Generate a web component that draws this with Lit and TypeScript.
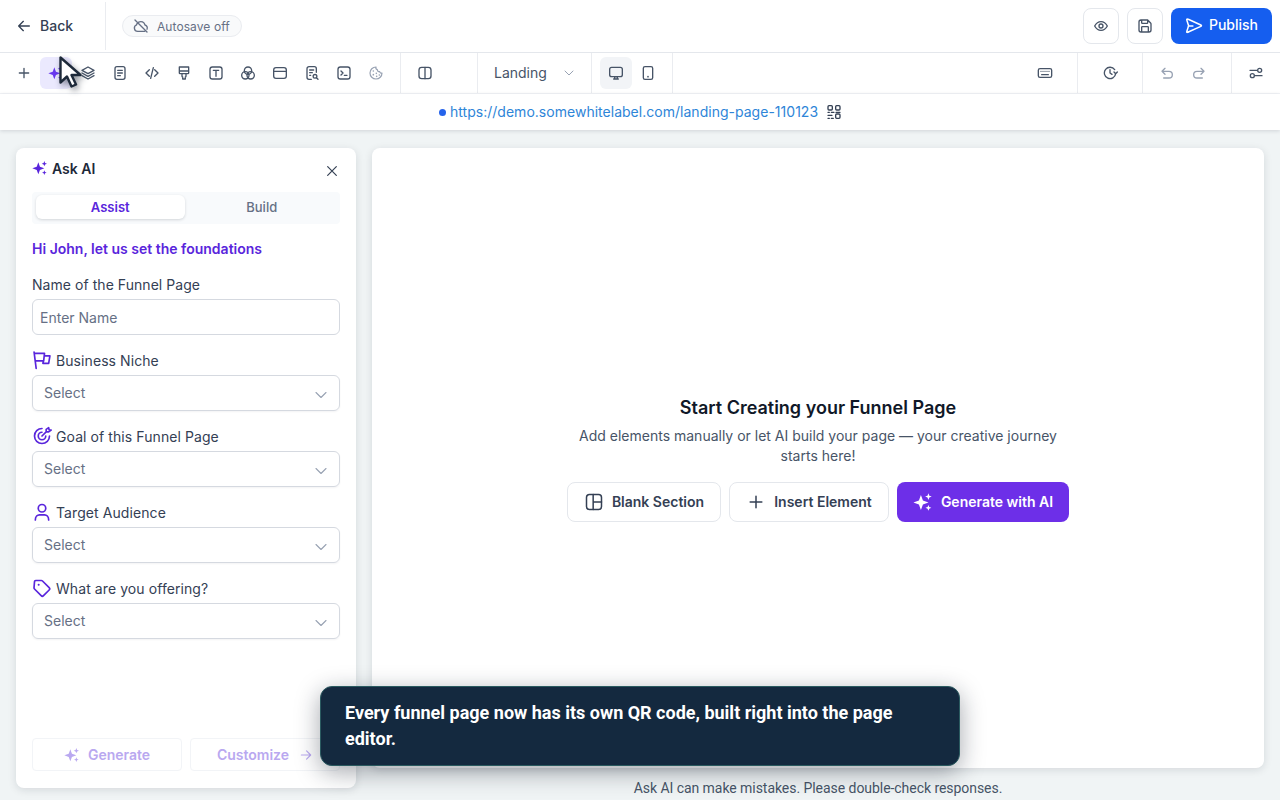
import { LitElement, html, css, svg } from 'lit';
import { customElement } from 'lit/decorators.js';

// icon bodies, all on a 24 grid and stroked with currentColor
const ICONS = {
  arrowLeft: svg`<path d="M20 12H4M11 5l-7 7 7 7"/>`,
  arrowRight: svg`<path d="M4 12h16M13 5l7 7-7 7"/>`,
  cloudOff: svg`<path d="M3 3l18 18M8.5 6.2A6.5 6.5 0 0 1 18 10.5a4.5 4.5 0 0 1 3 6.3M17.5 20H7a5 5 0 0 1-1.6-9.7c.1-.7.3-1.3.6-1.9"/>`,
  eye: svg`<path d="M2.5 12S6 5.5 12 5.5 21.5 12 21.5 12 18 18.5 12 18.5 2.5 12 2.5 12z"/><circle cx="12" cy="12" r="3"/>`,
  save: svg`<path d="M7 3v4a1 1 0 0 0 1 1h7a1 1 0 0 0 1-1V3M17 21v-7a1 1 0 0 0-1-1H8a1 1 0 0 0-1 1v7M16 3l4.4 4.4c.4.4.6.9.6 1.4V18a3 3 0 0 1-3 3H6a3 3 0 0 1-3-3V6a3 3 0 0 1 3-3z"/>`,
  send: svg`<path d="M10.5 12H5M4.6 12.4l-2 6.2c-.3.9-.4 1.4-.2 1.7.2.2.6.3.9.2.4-.1.9-.3 1.8-.8l15.3-6.9c.9-.4 1.3-.6 1.4-.9.1-.2.1-.5 0-.8-.1-.2-.5-.4-1.4-.8L5.1 3.4c-.9-.4-1.4-.6-1.8-.7-.3-.1-.7 0-.9.2-.2.3-.1.8.2 1.7l2 6.3c.1.2.1.3.1.5v.5c0 .2-.1.3-.1.5z"/>`,
  plus: svg`<path d="M12 5v14M5 12h14"/>`,
  layers: svg`<path d="M12 3l9 5-9 5-9-5z"/><path d="M3 12l9 5 9-5M3 16l9 5 9-5"/>`,
  doc: svg`<rect x="4.5" y="2.5" width="15" height="19" rx="3"/><path d="M8.5 8h7M8.5 12h7M8.5 16h4"/>`,
  code: svg`<path d="M8 7l-5 5 5 5M16 7l5 5-5 5M14 4l-4 16"/>`,
  brush: svg`<path d="M5 3h14v9a1 1 0 0 1-1 1H6a1 1 0 0 1-1-1zM5 9h14M9 13v4a1 1 0 0 0 1 1v3h4v-3a1 1 0 0 0 1-1v-4"/>`,
  text: svg`<rect x="3" y="3" width="18" height="18" rx="3.5"/><path d="M8 8h8M12 8v9"/>`,
  circles: svg`<circle cx="12" cy="8.5" r="5.5"/><circle cx="8" cy="15.5" r="5.5"/><circle cx="16" cy="15.5" r="5.5"/>`,
  browser: svg`<rect x="2.5" y="4" width="19" height="16" rx="3.5"/><path d="M2.5 9.5h19"/>`,
  docSearch: svg`<path d="M11 21.5H7.5a3 3 0 0 1-3-3v-13a3 3 0 0 1 3-3h8a3 3 0 0 1 3 3V11M8.5 7.5h6M8.5 11.5h4M8.5 15.5h1.5"/><circle cx="16.5" cy="17" r="2.8"/><path d="M18.6 19.1l2.4 2.4"/>`,
  terminal: svg`<rect x="3" y="3" width="18" height="18" rx="3.5"/><path d="M7.5 9l3 3-3 3M12.5 15.5h4"/>`,
  cookie: svg`<path d="M12 3a9 9 0 1 0 9 9c-1.5.5-3-.2-3.5-2-1.8.3-3.5-1-3.5-3-1.5-.5-2.5-2.5-2-4z"/><path d="M8 9h.01M8 14.5h.01M12.5 12.5h.01M13 17h.01M17 15h.01" stroke-width="2.5"/>`,
  columns: svg`<rect x="3" y="3.5" width="18" height="17" rx="4"/><path d="M12 3.5v17"/>`,
  chevron: svg`<path d="M6 9l6 6 6-6"/>`,
  monitor: svg`<rect x="2.5" y="3.5" width="19" height="14" rx="3"/><path d="M8.5 21h7M10 17.5h4V21h-4z"/>`,
  phone: svg`<rect x="5" y="2.5" width="14" height="19" rx="2.5"/><path d="M12 17.5h.01" stroke-width="2.5"/>`,
  keyboard: svg`<rect x="2" y="5.5" width="20" height="13" rx="2.5"/><path d="M6 9.5h.01M9 9.5h.01M12 9.5h.01M15 9.5h.01M18 9.5h.01M7 14.5h10" stroke-width="2"/>`,
  history: svg`<path d="M20.5 13a8.5 8.5 0 1 1-1.5-6M18 10.5l2.5 2.5 2.5-2.5M12 7v5l3 2"/>`,
  undo: svg`<path d="M9 5L4.5 9.5 9 14M4.5 9.5H15a5 5 0 0 1 0 10H7"/>`,
  redo: svg`<path d="M15 5l4.5 4.5L15 14M19.5 9.5H9a5 5 0 0 0 0 10h8"/>`,
  sliders: svg`<path d="M3 8h11M10 16h11"/><circle cx="17.5" cy="8" r="3"/><circle cx="6.5" cy="16" r="3"/>`,
  qr: svg`<rect x="3" y="2.5" width="6.5" height="6.5" rx="1.5"/><rect x="14.5" y="2.5" width="6.5" height="6.5" rx="1.5"/><rect x="14.5" y="15" width="6.5" height="6.5" rx="1.5"/><path d="M3 12.5h2M8 12.5h4M15 12.5h6M3 17h6M3 21.5h2M8 21.5h3"/>`,
  close: svg`<path d="M5.5 5.5l13 13M18.5 5.5l-13 13"/>`,
  flag: svg`<path d="M5 22L2.5 2.5M3 4h12l-1 9H4.2M15 7h6.5l-1.5 9h-7l1-3"/>`,
  target: svg`<path d="M21 12a9 9 0 1 1-9-9M16.5 12a4.5 4.5 0 1 1-4.5-4.5M12 12l5-5M17 7V4l3-2 .5 2.5L23 5l-3 2z"/>`,
  user: svg`<circle cx="12" cy="7.5" r="4.5"/><path d="M4 21.5c0-4 2.5-6 5-6h6c2.5 0 5 2 5 6"/>`,
  tag: svg`<path d="M3 4.5A1.5 1.5 0 0 1 4.5 3h6.7c.5 0 1 .2 1.4.6l8 8c.8.8.8 2 0 2.8l-6.8 6.8c-.8.8-2 .8-2.8 0l-8-8c-.4-.4-.6-.9-.6-1.4z"/><path d="M8 8h.01" stroke-width="2.5"/>`,
  layout: svg`<rect x="3" y="3" width="18" height="18" rx="3.5"/><path d="M11 3v18M11 12h10"/>`,
};

// sparkles are solid, so they do not go through the stroked set
const sparkle = (size: number) => html`<svg class="spark" width=${size} height=${size} viewBox="0 0 24 24" fill="currentColor">
  <path d="M9.5 3.5l2.4 6.6 6.6 2.400-6.600 2.400-2.400 6.600-2.400-6.600L.5 12.500l6.600-2.400z"/>
  <path d="M18.500 1.500l1.100 2.900 2.900 1.100-2.900 1.100-1.100 2.900-1.100-2.900-2.900-1.100 2.900-1.100z"/>
  <path d="M18.500 15.500l1 2.500 2.500 1-2.500 1-1 2.500-1-2.500-2.500-1 2.500-1z"/>
</svg>`;

const icon = (name: keyof typeof ICONS, size = 16, width = 2) => html`<svg
  width=${size}
  height=${size}
  viewBox="0 0 24 24"
  fill="none"
  stroke="currentColor"
  stroke-width=${width}
  stroke-linecap="round"
  stroke-linejoin="round"
>${ICONS[name]}</svg>`;

const TOOLS: (keyof typeof ICONS)[] = ['layers', 'doc', 'code', 'brush', 'text', 'circles', 'browser', 'docSearch', 'terminal'];

const FIELDS: { label: string; icon: keyof typeof ICONS }[] = [
  { label: 'Business Niche', icon: 'flag' },
  { label: 'Goal of this Funnel Page', icon: 'target' },
  { label: 'Target Audience', icon: 'user' },
  { label: 'What are you offering?', icon: 'tag' },
];

@customElement('app-root')
export class AppRoot extends LitElement {
  static override styles = css`
    :host {
      display: block;
      position: relative;
      width: 1280px;
      height: 800px;
      overflow: hidden;
      background: #f0f4f5;
      font-family: Inter, 'Liberation Sans', sans-serif;
      color: #344054;
    }

    svg {
      display: block;
      flex: none;
    }

    /* Top bar */
    .topbar {
      height: 53px;
      box-sizing: border-box;
      display: flex;
      align-items: center;
      background: #fff;
      border-bottom: 1px solid #e4e7ec;
    }

    .back {
      width: 106px;
      height: 48px;
      box-sizing: border-box;
      display: flex;
      align-items: center;
      gap: 8px;
      padding-left: 16px;
      border-right: 1px solid #eaecf0;
      font-size: 14px;
      font-weight: 500;
      color: #344054;
    }

    .back span {
      margin-top: -2px;
    }

    .autosave {
      margin-left: 16px;
      height: 22px;
      width: 120px;
      box-sizing: border-box;
      display: flex;
      align-items: center;
      gap: 8px;
      padding-left: 10px;
      border: 1px solid #eaecf0;
      border-radius: 11px;
      background: #f9fafb;
      font-size: 12px;
      letter-spacing: 0.08px;
      color: #667085;
    }

    .top-actions {
      margin-left: auto;
      padding-right: 8px;
      display: flex;
      gap: 8px;
    }

    .square {
      width: 36px;
      height: 36px;
      display: grid;
      place-items: center;
      box-sizing: border-box;
      border: 1px solid #e4e7ec;
      border-radius: 8px;
      background: #fff;
      color: #475467;
    }

    .publish {
      width: 101px;
      height: 36px;
      display: flex;
      align-items: center;
      justify-content: center;
      gap: 6px;
      border-radius: 8px;
      background: #155eef;
      color: #fff;
      font-size: 14px;
      font-weight: 500;
    }

    .publish span {
      margin-top: -3px;
    }

    /* Tool strip */
    .toolbar {
      height: 41px;
      box-sizing: border-box;
      display: flex;
      background: #fff;
      border-bottom: 1px solid #f2f4f7;
      color: #475467;
    }

    .group {
      display: flex;
      align-items: center;
      padding: 0 8px;
      border-right: 1px solid #eaecf0;
    }

    .tool {
      width: 32px;
      height: 32px;
      display: grid;
      place-items: center;
      border-radius: 6px;
    }

    .tool.ai {
      background: #ebe9fe;
      color: #6938ef;
    }

    .tool.on {
      background: #f2f4f7;
    }

    .tool.muted {
      color: #98a2b3;
    }

    .layout-group {
      width: 77px;
      box-sizing: border-box;
    }

    .page-select {
      width: 114px;
      box-sizing: border-box;
      padding: 0 14px 0 16px;
      justify-content: space-between;
      font-size: 14px;
      color: #475467;
    }

    .page-select span {
      margin-top: -2px;
    }

    .page-select svg {
      color: #98a2b3;
    }

    .right {
      margin-left: auto;
      display: flex;
    }

    .right .group {
      border-right: none;
      border-left: 1px solid #eaecf0;
    }

    .right .group.first {
      border-left: none;
    }

    .right .group.wide {
      padding: 0 16px;
    }

    .right .group.history {
      padding-right: 16px;
    }

    /* Published url */
    .urlbar {
      position: relative;
      height: 36px;
      box-sizing: border-box;
      padding-left: 439px;
      display: flex;
      align-items: center;
      background: #fff;
      box-shadow: 0 1px 4px rgba(16, 24, 40, 0.14);
      font-size: 14px;
      letter-spacing: 0.02px;
      color: #2e85d8;
    }

    .url {
      margin-top: -1px;
    }

    .dot {
      width: 7px;
      height: 7px;
      margin-right: 4px;
      border-radius: 50%;
      background: #2563eb;
    }

    .qr {
      margin-left: 8px;
      color: #344054;
    }

    /* Workspace */
    .workspace {
      display: flex;
      gap: 16px;
      padding: 18px 16px 0;
    }

    .panel {
      width: 340px;
      height: 640px;
      box-sizing: border-box;
      display: flex;
      flex-direction: column;
      padding: 10px 16px 17px;
      background: #fff;
      border-radius: 8px;
      box-shadow: 0 2px 8px rgba(16, 24, 40, 0.12);
    }

    .panel-head {
      display: flex;
      align-items: center;
      gap: 4px;
      height: 20px;
      font-size: 14px;
      font-weight: 600;
      color: #1d2939;
    }

    .panel-head .spark {
      color: #5925dc;
    }

    .panel-close {
      margin-left: auto;
      position: relative;
      top: 3px;
      color: #344054;
    }

    .tabs {
      margin-top: 14px;
      height: 32px;
      box-sizing: border-box;
      padding: 3px 4px 5px;
      display: flex;
      background: #f8fafc;
      border-radius: 4px;
      font-size: 13px;
      font-weight: 500;
      color: #667085;
    }

    .tab {
      flex: 1;
      display: grid;
      place-items: center;
      border-radius: 6px;
    }

    .tab.active {
      margin-right: 3px;
      background: #fff;
      color: #5925dc;
      font-weight: 600;
      box-shadow: 0 1px 3px rgba(16, 24, 40, 0.16);
    }

    .greeting {
      margin-top: 16px;
      line-height: 18px;
      font-size: 14px;
      font-weight: 600;
      color: #5925dc;
    }

    .label {
      margin-top: 18px;
      height: 18px;
      line-height: 18px;
      font-size: 14px;
      letter-spacing: 0.05px;
      color: #344054;
    }

    .input {
      margin-top: 5px;
      height: 36px;
      box-sizing: border-box;
      display: flex;
      align-items: center;
      padding: 0 7px;
      border: 1px solid #d5d9e0;
      border-radius: 6px;
      font-size: 14px;
      color: #667085;
    }

    .field-label {
      margin: 13px 0 3px;
      height: 24px;
      display: flex;
      align-items: center;
      gap: 4px;
      font-size: 14px;
      letter-spacing: 0.08px;
      color: #344054;
    }

    .field-label svg {
      color: #5925dc;
    }

    .select {
      height: 36px;
      box-sizing: border-box;
      display: flex;
      align-items: center;
      justify-content: space-between;
      padding: 0 8px 2px 11px;
      border: 1px solid #d5d9e0;
      border-radius: 6px;
      box-shadow: 0 1px 2px rgba(16, 24, 40, 0.05);
      font-size: 14px;
      color: #667085;
    }

    .select svg {
      position: relative;
      top: 3px;
      color: #98a2b3;
    }

    .panel-foot {
      margin-top: auto;
      display: flex;
      gap: 8px;
    }

    .ghost {
      flex: 1;
      height: 33px;
      box-sizing: border-box;
      display: flex;
      align-items: center;
      justify-content: center;
      gap: 8px;
      border: 1px solid #f2f4f7;
      border-radius: 4px;
      font-size: 14px;
      font-weight: 600;
      color: #b9a8f0;
    }

    .ghost.customize {
      gap: 10px;
    }

    .main {
      width: 892px;
    }

    .canvas {
      height: 620px;
      display: flex;
      flex-direction: column;
      align-items: center;
      justify-content: center;
      background: #fff;
      border-radius: 8px;
      box-shadow: 0 2px 8px rgba(16, 24, 40, 0.12);
    }

    .title {
      line-height: 26px;
      font-size: 18px;
      font-weight: 600;
      color: #101828;
    }

    .sub {
      width: 500px;
      margin-top: 5px;
      line-height: 20px;
      text-align: center;
      font-size: 14px;
      color: #475467;
    }

    .actions {
      margin-top: 16px;
      display: flex;
      gap: 8px;
    }

    .action {
      height: 40px;
      box-sizing: border-box;
      display: flex;
      align-items: center;
      justify-content: center;
      gap: 8px;
      border: 1px solid #e4e7ec;
      border-radius: 8px;
      background: #fff;
      font-size: 14px;
      font-weight: 600;
      color: #344054;
    }

    .action.blank {
      width: 154px;
    }

    .action.insert {
      width: 160px;
    }

    .action.generate {
      width: 172px;
      border: none;
      background: #6d2fe8;
      color: #fff;
    }

    .disclaimer {
      height: 40px;
      display: flex;
      align-items: center;
      justify-content: center;
      font-family: Roboto, Inter, sans-serif;
      font-size: 14px;
      letter-spacing: -0.05px;
      color: #475467;
    }

    /* Overlays */
    .toast {
      position: absolute;
      left: 320px;
      top: 686px;
      width: 640px;
      height: 80px;
      box-sizing: border-box;
      padding: 13px 24px;
      background: #14293f;
      border: 1px solid #2a5a60;
      border-radius: 12px;
      box-shadow: 0 6px 24px rgba(16, 24, 40, 0.38);
      font-family: Roboto, sans-serif;
      font-size: 18px;
      font-weight: 700;
      line-height: 26px;
      color: #fff;
    }

    .cursor {
      position: absolute;
      left: 58px;
      top: 55px;
      filter: drop-shadow(2px 3px 3px rgba(16, 24, 40, 0.45));
    }
  `;

  override render() {
    return html`
      <div class="topbar">
        <div class="back">${icon('arrowLeft')}<span>Back</span></div>
        <div class="autosave">${icon('cloudOff')}<span>Autosave off</span></div>
        <div class="top-actions">
          <div class="square">${icon('eye')}</div>
          <div class="square">${icon('save')}</div>
          <div class="publish">${icon('send', 18, 2)}<span>Publish</span></div>
        </div>
      </div>

      <div class="toolbar">
        <div class="group">
          <div class="tool">${icon('plus')}</div>
          <div class="tool ai">${sparkle(16)}</div>
          ${TOOLS.map((name) => html`<div class="tool">${icon(name)}</div>`)}
          <div class="tool muted">${icon('cookie', 16, 1.8)}</div>
        </div>
        <div class="group layout-group"><div class="tool">${icon('columns')}</div></div>
        <div class="group page-select"><span>Landing</span>${icon('chevron', 16, 1.5)}</div>
        <div class="group">
          <div class="tool on">${icon('monitor')}</div>
          <div class="tool">${icon('phone')}</div>
        </div>
        <div class="right">
          <div class="group wide first"><div class="tool">${icon('keyboard')}</div></div>
          <div class="group wide"><div class="tool">${icon('history')}</div></div>
          <div class="group history">
            <div class="tool muted">${icon('undo')}</div>
            <div class="tool muted">${icon('redo')}</div>
          </div>
          <div class="group"><div class="tool">${icon('sliders')}</div></div>
        </div>
      </div>

      <div class="urlbar">
        <span class="dot"></span>
        <span class="url">https://demo.somewhitelabel.com/landing-page-110123</span>
        <span class="qr">${icon('qr', 16)}</span>
      </div>

      <div class="workspace">
        <section class="panel">
          <div class="panel-head">
            ${sparkle(16)}<span>Ask AI</span>
            <span class="panel-close">${icon('close', 16, 1.8)}</span>
          </div>
          <div class="tabs">
            <div class="tab active">Assist</div>
            <div class="tab">Build</div>
          </div>
          <div class="greeting">Hi John, let us set the foundations</div>
          <div class="label">Name of the Funnel Page</div>
          <div class="input">Enter Name</div>
          ${FIELDS.map(
            (field) => html`
              <div class="field-label">${icon(field.icon, 20, 2)}<span>${field.label}</span></div>
              <div class="select"><span>Select</span>${icon('chevron', 20, 1.3)}</div>
            `,
          )}
          <div class="panel-foot">
            <div class="ghost">${sparkle(16)}<span>Generate</span></div>
            <div class="ghost customize"><span>Customize</span>${icon('arrowRight', 14)}</div>
          </div>
        </section>

        <div class="main">
          <section class="canvas">
            <div class="title">Start Creating your Funnel Page</div>
            <div class="sub">Add elements manually or let AI build your page — your creative journey starts here!</div>
            <div class="actions">
              <div class="action blank">${icon('layout', 20, 1.8)}<span>Blank Section</span></div>
              <div class="action insert">${icon('plus', 20, 1.8)}<span>Insert Element</span></div>
              <div class="action generate">${sparkle(20)}<span>Generate with AI</span></div>
            </div>
          </section>
          <div class="disclaimer">Ask AI can make mistakes. Please double-check responses.</div>
        </div>
      </div>

      <div class="toast">Every funnel page now has its own QR code, built right into the page editor.</div>

      <svg class="cursor" width="26" height="34" viewBox="0 0 26 34">
        <path d="M2.5 2.5v25l6.5-6 4.5 10 4.5-2-4.5-9.5h9z" fill="#fff" stroke="#1d2939" stroke-width="2.4" stroke-linejoin="round"/>
      </svg>
    `;
  }
}
